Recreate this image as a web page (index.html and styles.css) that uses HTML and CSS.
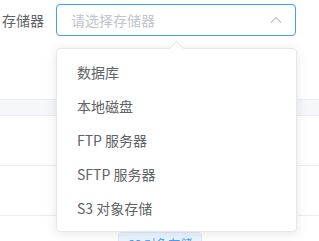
FILE: index.html
```html
<!DOCTYPE html>
<html lang="zh-CN">
<head>
    <meta charset="UTF-8">
    <title>存储器</title>
    <link rel="stylesheet" href="styles.css">
</head>
<body>
    <div class="form-row">
        <label class="form-label">存储器</label>
        <div class="select">
            <div class="select-input">
                <span class="placeholder">请选择存储器</span>
                <svg class="arrow" width="12" height="12" viewBox="0 0 12 12">
                    <path d="M1 8.5 L6 3.5 L11 8.5" fill="none" stroke="#c0c4cc" stroke-width="1.2"/>
                </svg>
            </div>
            <div class="dropdown">
                <div class="dropdown-arrow"></div>
                <ul class="dropdown-list">
                    <li>数据库</li>
                    <li>本地磁盘</li>
                    <li>FTP 服务器</li>
                    <li>SFTP 服务器</li>
                    <li>S3 对象存储</li>
                </ul>
            </div>
        </div>
    </div>

    <div class="table">
        <div class="table-head"></div>
        <div class="table-row"></div>
        <div class="table-row"></div>
        <div class="table-row last">
            <span class="tag">S3 对象存储</span>
        </div>
    </div>
</body>
</html>
```

FILE: styles.css
```css
body {
    margin: 0;
    background: #fff;
    font-family: "Noto Sans CJK SC", "Noto Sans", sans-serif;
    font-size: 14px;
    color: #606266;
    overflow: hidden;
}
.form-row {
    display: flex;
    align-items: center;
    padding: 4px 0 0 2px;
}
.form-label {
    width: 42px;
    padding-right: 12px;
    line-height: 32px;
    color: #606266;
}
.select {
    position: relative;
    width: 240px;
}
.select-input {
    box-sizing: border-box;
    height: 32px;
    border: 1px solid #409eff;
    border-radius: 4px;
    display: flex;
    align-items: center;
    justify-content: space-between;
    padding: 0 13px 0 14px;
}
.placeholder {
    color: #c0c4cc;
}
.arrow {
    display: block;
}
.dropdown {
    position: absolute;
    top: 44px;
    left: 0;
    width: 241px;
    box-sizing: border-box;
    background: #fff;
    border: 1px solid #e4e7ed;
    border-radius: 4px;
    box-shadow: 0 2px 12px rgba(0, 0, 0, 0.1);
    z-index: 10;
}
.dropdown-arrow {
    position: absolute;
    top: -6px;
    left: 114px;
    width: 10px;
    height: 10px;
    background: #fff;
    border-top: 1px solid #e4e7ed;
    border-left: 1px solid #e4e7ed;
    transform: rotate(45deg);
}
.dropdown-list {
    position: relative;
    list-style: none;
    margin: 0;
    padding: 6px 0;
}
.dropdown-list li {
    height: 34px;
    line-height: 34px;
    padding: 0 20px;
    color: #606266;
}
.table {
    margin-top: 63px;
}
.table-head {
    height: 15px;
    background: #f5f7fa;
    border-top: 1px solid #ebeef5;
    border-bottom: 1px solid #ebeef5;
}
.table-row {
    height: 49px;
    border-bottom: 1px solid #ebeef5;
}
.table-row.last {
    border-bottom: none;
    padding: 16px 0 0 118px;
}
.tag {
    display: inline-block;
    width: 84px;
    height: 24px;
    line-height: 22px;
    box-sizing: border-box;
    text-align: center;
    font-size: 12px;
    color: #409eff;
    background: #ecf5ff;
    border: 1px solid #d9ecff;
    border-radius: 4px;
}
```
